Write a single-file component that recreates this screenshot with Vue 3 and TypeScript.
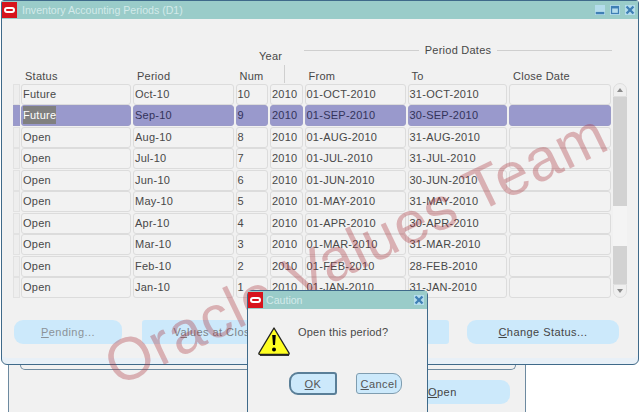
<script setup lang="ts">
interface Row { status: string; period: string; num: number; from: string; to: string }
const months: [string, string, string, string][] = [
  ['Oct', 'OCT', '31', '10'], ['Sep', 'SEP', '30', '9'], ['Aug', 'AUG', '31', '8'],
  ['Jul', 'JUL', '31', '7'], ['Jun', 'JUN', '30', '6'], ['May', 'MAY', '31', '5'],
  ['Apr', 'APR', '30', '4'], ['Mar', 'MAR', '31', '3'], ['Feb', 'FEB', '28', '2'], ['Jan', 'JAN', '31', '1'],
]
const rows: Row[] = months.map((m, i) => ({
  status: i < 2 ? 'Future' : 'Open',
  period: `${m[0]}-10`,
  num: Number(m[3]),
  from: `01-${m[1]}-2010`,
  to: `${m[2]}-${m[1]}-2010`,
}))
</script>

<template>
  <div class="desktop">
    <div class="back-window">
      <div class="back-frame"></div>
      <div class="back-actions"><button class="btn open-btn"><u>O</u>pen</button></div>
    </div>

    <section class="main-window">
      <header class="titlebar">
        <span class="logo"><i></i></span>
        <span class="title">Inventory Accounting Periods (D1)</span>
        <span class="win-controls">
          <svg width="10" height="10" viewBox="0 0 13 13"><rect width="13" height="13" fill="#b4dcec"/><rect x="1" y="9" width="11" height="3" fill="#3f7fb5"/></svg>
          <svg width="10" height="10" viewBox="0 0 13 13"><rect width="13" height="13" fill="#b4dcec"/><rect x="2" y="2" width="9" height="9" fill="none" stroke="#3f7fb5" stroke-width="1.6"/><rect x="2" y="1.500" width="9" height="3" fill="#3f7fb5"/></svg>
          <svg width="10" height="10" viewBox="0 0 13 13"><rect width="13" height="13" fill="#b4dcec"/><path d="M2 2l9 9M11 2l-9 9" stroke="#3f7fb5" stroke-width="3"/></svg>
        </span>
      </header>

      <div class="content">
        <div class="group-head">
          <div class="year-head">
            <span>Year</span>
            <i class="year-rule"></i>
          </div>
          <div class="dates-head"><span>Period Dates</span></div>
        </div>

        <div class="table-wrap">
          <div class="table">
            <div class="grid head">
              <span></span><span>Status</span><span>Period</span><span>Num</span><span></span>
              <span>From</span><span>To</span><span>Close Date</span>
            </div>
            <div v-for="(r, i) in rows" :key="r.period" class="grid row" :class="{ selected: i === 1 }">
              <div class="sel"></div>
              <div class="cell"><span :class="{ mark: i === 1 }">{{ r.status }}</span></div>
              <div class="cell">{{ r.period }}</div>
              <div class="cell">{{ r.num }}</div>
              <div class="cell">2010</div>
              <div class="cell">{{ r.from }}</div>
              <div class="cell">{{ r.to }}</div>
              <div class="cell"></div>
            </div>
          </div>
          <div class="scrollbar">
            <div class="arrow up"></div>
            <div class="track grow1"></div>
            <div class="thumb"></div>
            <div class="track grow2"></div>
            <div class="arrow down"></div>
          </div>
        </div>

        <div class="actions">
          <button class="btn pending"><u>P</u>ending...</button>
          <button class="btn values">V<u>a</u>lues at Close</button>
          <button class="btn hidden-btn" aria-hidden="true"></button>
          <button class="btn change"><u>C</u>hange Status...</button>
        </div>
      </div>
    </section>

    <div class="watermark">Oracle Values Team</div>

    <section class="dialog">
      <header class="titlebar dlg-title">
        <span class="logo small"><i></i></span>
        <span class="title">Caution</span>
        <span class="win-controls">
          <svg width="10" height="10" viewBox="0 0 13 13"><rect width="13" height="13" fill="#b4dcec"/><path d="M2 2l9 9M11 2l-9 9" stroke="#3f7fb5" stroke-width="3"/></svg>
        </span>
      </header>
      <div class="dlg-body">
        <svg class="warn" width="34" height="30" viewBox="0 0 34 30">
          <path d="M17 2 L32 27 Q32.500 28.500 31 28.500 L3 28.500 Q1.500 28.500 2 27 Z" fill="#ffff22" stroke="#222" stroke-width="1.4" stroke-linejoin="round"/>
          <path d="M3 29.500H32" stroke="#333" stroke-width="1.200"/>
          <path d="M15.200 9h3.600l-.8 10h-2z" fill="#000"/>
          <circle cx="17" cy="23.500" r="2" fill="#000"/>
        </svg>
        <p>Open this period?</p>
      </div>
      <div class="dlg-actions">
        <button class="btn ok"><u>O</u>K</button>
        <button class="btn cancel"><u>C</u>ancel</button>
      </div>
    </section>
  </div>
</template>

<style>
html, body { margin: 0; background: #fff; }
</style>

<style scoped>
.desktop {
  position: relative;
  width: 640px;
  height: 412px;
  overflow: hidden;
  background: #fff;
  font-family: "Liberation Sans", Arial, sans-serif;
  font-size: 11px;
  letter-spacing: 0.25px;
  color: #484848;
}
.back-window {
  position: absolute;
  left: 8px;
  top: 340px;
  width: 518px;
  height: 90px;
  box-sizing: border-box;
  border: 1px solid #6d8aa0;
  border-radius: 6px;
  background: #f1f1f1;
}
.back-frame {
  height: 28px;
  margin: 0 9px 0 11px;
  border: 1px solid #6d8aa0;
  border-top: none;
  border-radius: 0 0 5px 5px;
}
.back-actions {
  display: flex;
  justify-content: flex-end;
  padding: 10px 15px 0 0;
}
.main-window {
  position: absolute;
  left: 1px;
  top: 0;
  width: 638px;
  height: 365px;
  box-sizing: border-box;
  border: 1px solid #3f6a8a;
  border-radius: 3px 3px 6px 6px;
  background: #f1f1f1;
  box-shadow: inset 0 -6px 0 #e8f0f7;
  z-index: 1;
}
.titlebar {
  display: flex;
  align-items: center;
  height: 18px;
  background: #9accc9;
  color: #d3eaea;
  padding-right: 3px;
}
.logo {
  display: flex;
  align-items: center;
  justify-content: center;
  width: 15px;
  height: 16px;
  background: #d7141c;
  margin-right: 5px;
  flex: none;
}
.logo i {
  display: block;
  width: 11px;
  height: 6px;
  border: 2px solid #fff;
  border-radius: 4px;
  box-sizing: border-box;
}
.title { flex: 1; white-space: nowrap; font-size: 10.6px; letter-spacing: 0; }
.win-controls { display: flex; gap: 5px; }
.content { display: flex; flex-direction: column; }
.group-head {
  position: relative;
  height: 47px;
  flex: none;
}
.year-head {
  position: absolute;
  left: 257px;
  top: 31px;
  width: 26px;
  height: 33px;
}
.year-head span { position: absolute; top: 0; left: 0; }
.year-rule {
  position: absolute;
  left: 25px;
  top: 15px;
  width: 1px;
  height: 18px;
  background: #cfcfcf;
}
.dates-head {
  position: absolute;
  left: 302px;
  top: 25px;
  width: 308px;
  display: flex;
  justify-content: center;
  align-items: center;
  gap: 6px;
}
.dates-head::before, .dates-head::after {
  content: "";
  flex: 1;
  height: 1px;
  background: #cfcfcf;
}
.table-wrap {
  display: flex;
  align-items: flex-end;
  padding-left: 11px;
  gap: 1px;
}
.table { display: flex; flex-direction: column; width: 599px; }
.grid {
  display: grid;
  grid-template-columns: 7px 112px 102.5px 34.5px 34.5px 103px 101.5px 104px;
}
.head { height: 18px; align-items: start; line-height: 20px; }
.head span { padding-left: 5px; }
.row { height: 21.45px; }
.cell {
  box-sizing: border-box;
  margin: 0 1px;
  height: 21px;
  line-height: 18px;
  padding-left: 1px;
  border: 1.5px solid #dcdcdc;
  border-radius: 3px;
  background: #f2f2f2;
  white-space: nowrap;
}
.sel {
  border: 1px solid #e2e2e2;
  box-sizing: border-box;
  height: 21px;
  background: #eeeeee;
}
.selected .cell, .selected .sel {
  background: #9999cc;
  border-color: #9a9ac8;
  color: #33335a;
}
.mark { background: #808080; color: #fff; display: inline-block; height: 18px; }
.scrollbar {
  width: 14px;
  height: 215px;
  display: flex;
  flex-direction: column;
  flex: none;
}
.arrow {
  height: 14px;
  background: #efefef;
  border: 1px solid #dedede;
  box-sizing: border-box;
  position: relative;
  flex: none;
}
.up { border-radius: 7px 7px 0 0; }
.down { border-radius: 0 0 7px 7px; }
.arrow::after {
  content: "";
  position: absolute;
  left: 3px;
  top: 4px;
  border-left: 3px solid transparent;
  border-right: 3px solid transparent;
}
.up::after { border-bottom: 4px solid #8a8a8a; }
.down::after { border-top: 4px solid #8a8a8a; }
.track { background: #d2d2d2; }
.grow1 { height: 109px; }
.grow2 { flex: 1; }
.thumb { height: 40px; background: #f4f4f4; }
.actions {
  display: flex;
  align-items: center;
  margin-top: 21.5px;
  padding-left: 12px;
}
.btn {
  font: inherit;
  letter-spacing: 0.45px;
  color: #555;
  height: 24px;
  padding: 0;
  border: none;
  border-radius: 9px;
  background: #cce9fb;
}
.pending { width: 108px; color: #8b9298; margin-right: 20px; }
.values { width: 146px; color: #7b8288; border-radius: 3px; }
.hidden-btn { width: 161px; margin-right: 18px; border-radius: 3px; }
.change { width: 152px; color: #444; }
.open-btn { width: 90px; color: #444; text-align: left; padding-left: 8px; }
.dialog {
  position: absolute;
  left: 247px;
  top: 290px;
  width: 181px;
  height: 130px;
  box-sizing: border-box;
  border: 1px solid #3f6a8a;
  border-radius: 5px;
  background: #f1f1f1;
  z-index: 3;
}
.dlg-title { height: 18px; }
.logo.small { margin-right: 3px; }
.dlg-body {
  display: flex;
  align-items: flex-start;
  padding: 17px 0 0 9px;
  height: 31px;
}
.warn { flex: none; margin-right: 7px; }
.dlg-body p { margin: 0; letter-spacing: 0.2px; color: #484848; }
.dlg-actions {
  display: flex;
  align-items: center;
  gap: 19px;
  padding: 15px 0 0 41px;
}
.ok {
  width: 48px;
  height: 23px;
  border: 2px solid #5a7f98;
  border-radius: 9px 3px 3px 9px;
}
.cancel {
  width: 46px;
  height: 21px;
  border: 1px solid #7f9db0;
  border-radius: 3px 9px 9px 3px;
}
.watermark {
  position: absolute;
  left: 118px;
  top: 337px;
  z-index: 2;
  font-size: 60px;
  line-height: 60px;
  letter-spacing: 0.8px;
  white-space: nowrap;
  color: rgba(170, 50, 60, 0.34);
  transform: rotate(-25.8deg);
  transform-origin: 0 51px;
  pointer-events: none;
}
</style>
